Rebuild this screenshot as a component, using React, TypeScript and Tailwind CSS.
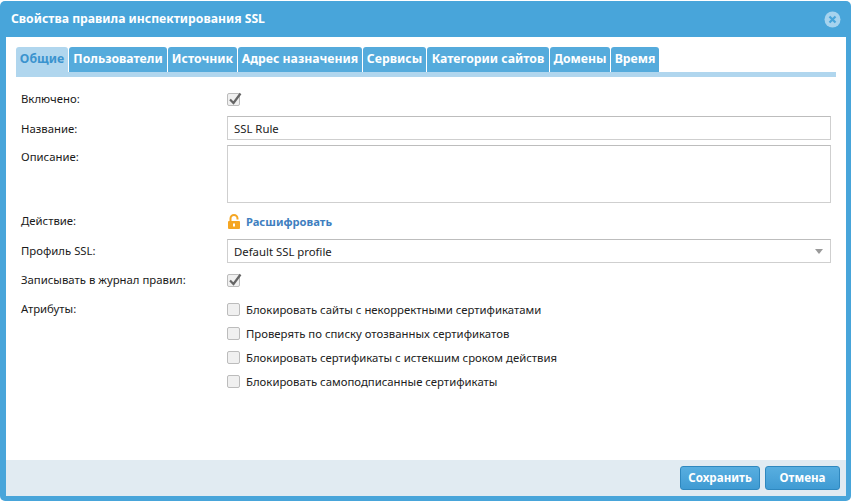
import React from "react";

const font = { fontFamily: '"Noto Sans", sans-serif' };

function Check({ checked }: { checked?: boolean }) {
  return (
    <span className="relative block w-[13px] h-[13px] rounded-[2px] border border-[#bcbcbc] bg-[#f0f0f0] shrink-0">
      {checked && (
        <svg className="absolute left-[-1px] top-[-4px]" width="17" height="17" viewBox="0 0 17 17">
          <path d="M3 9.5 L6.5 13 L13.5 3.5" fill="none" stroke="#666666" strokeWidth="2.2" />
        </svg>
      )}
    </span>
  );
}

const tabs = [
  ["Общие", "w-[52px]"],
  ["Пользователи", "w-[98px]"],
  ["Источник", "w-[69px]"],
  ["Адрес назначения", "w-[124px]"],
  ["Сервисы", "w-[63px]"],
  ["Категории сайтов", "w-[122px]"],
  ["Домены", "w-[60px]"],
  ["Время", "w-[48px]"],
];

const attrs = [
  "Блокировать сайты с некорректными сертификатами",
  "Проверять по списку отозванных сертификатов",
  "Блокировать сертификаты с истекшим сроком действия",
  "Блокировать самоподписанные сертификаты",
];

function Label({ children }: { children: React.ReactNode }) {
  return <div className="w-[206px] shrink-0 text-[11.35px] leading-[16px] text-[#1a1a1a]">{children}</div>;
}

export default function App() {
  return (
    <div className="w-[852px] h-[501px] bg-white pt-px pr-px" style={font}>
      <div className="w-[851px] h-[500px] bg-[#48a5da] rounded-[5px] flex flex-col px-[6px] pb-[5px]">
        <div className="h-[36px] shrink-0 flex items-center justify-between pl-[5px] pr-[4px]">
          <span className="text-[12.2px] font-bold text-white">Свойства правила инспектирования SSL</span>
          <svg width="17" height="17" viewBox="0 0 17 17">
            <circle cx="8.5" cy="8.5" r="8" fill="#a6d3ee" />
            <path d="M5.5 5.5 L11.5 11.5 M11.5 5.5 L5.5 11.5" stroke="#48a5da" strokeWidth="2.2" />
          </svg>
        </div>
        <div className="flex-1 bg-white flex flex-col min-h-0 mr-[-1px]">
          <div className="flex-1 pt-[10px] pl-[10px] pr-[10px]">
            <div className="flex gap-px border-b-[5px] border-[#b0d6ee] h-[30px]">
              {tabs.map(([t, w], i) => (
                <div
                  key={t}
                  className={`${w} h-[25px] rounded-t-[3px] flex items-center justify-center text-[12.25px] font-bold whitespace-nowrap ${
                    i === 0 ? "bg-[#b0d6ee] text-[#3a93ce]" : "bg-[#55abdc] text-white"
                  }`}
                >
                  {t}
                </div>
              ))}
            </div>
            <div className="pl-[5px] pr-[5px] pt-[14px]">
              <div className="flex items-center h-[16px] mb-[9px]">
                <Label>Включено:</Label>
                <Check checked />
              </div>
              <div className="flex mb-[5px]">
                <div className="pt-[5px]"><Label>Название:</Label></div>
                <div className="flex-1 h-[24px] border border-[#cfcfcf] border-t-[#bdbdbd] px-[6px] text-[11.35px] leading-[23px] text-[#222]">SSL Rule</div>
              </div>
              <div className="flex mb-[10px]">
                <div className="pt-[4px]"><Label>Описание:</Label></div>
                <div className="flex-1 h-[58px] border border-[#cfcfcf] border-t-[#bdbdbd]" />
              </div>
              <div className="flex items-center h-[16px] mb-[10px]">
                <Label>Действие:</Label>
                <svg width="14" height="16" viewBox="0 0 14 16" className="mr-[5px] relative top-px">
                  <path d="M3.5 7 V4.5 A3.5 3.5 0 0 1 10.5 4.5 V5.5" fill="none" stroke="#f5a623" strokeWidth="2" />
                  <rect x="1" y="7" width="12" height="8" rx="1" fill="#f5a623" />
                  <rect x="6" y="9.5" width="2" height="3" fill="#fff" />
                </svg>
                <span className="text-[11.2px] font-bold text-[#3f7fc0] relative top-px">Расшифровать</span>
              </div>
              <div className="flex items-center mb-[9px]">
                <Label>Профиль SSL:</Label>
                <div className="flex-1 h-[24px] border border-[#cfcfcf] border-t-[#bdbdbd] px-[6px] text-[11.35px] leading-[23px] text-[#222] flex justify-between items-center">
                  <span>Default SSL profile</span>
                  <span className="w-0 h-0 border-x-[4.5px] border-x-transparent border-t-[5px] border-t-[#9a9a9a] mr-px" />
                </div>
              </div>
              <div className="flex items-center h-[16px] mb-[13px]">
                <Label>Записывать в журнал правил:</Label>
                <Check checked />
              </div>
              <div className="flex">
                <Label>Атрибуты:</Label>
                <div className="flex flex-col gap-[8px]">
                  {attrs.map((a) => (
                    <div key={a} className="flex items-center gap-[6px] h-[16px] text-[11.35px] text-[#222]">
                      <Check />
                      <span>{a}</span>
                    </div>
                  ))}
                </div>
              </div>
            </div>
          </div>
          <div className="h-[36px] bg-[#e1ebf2] flex items-center justify-end gap-[5px] pr-[6px] shrink-0">
            <button className="w-[80px] h-[24px] rounded-[3px] border border-[#2f88bf] bg-gradient-to-b from-[#58aee0] to-[#3f9bd3] text-white text-[11.6px] font-bold">Сохранить</button>
            <button className="w-[75px] h-[24px] rounded-[3px] border border-[#2f88bf] bg-gradient-to-b from-[#58aee0] to-[#3f9bd3] text-white text-[11.6px] font-bold">Отмена</button>
          </div>
        </div>
      </div>
    </div>
  );
}
